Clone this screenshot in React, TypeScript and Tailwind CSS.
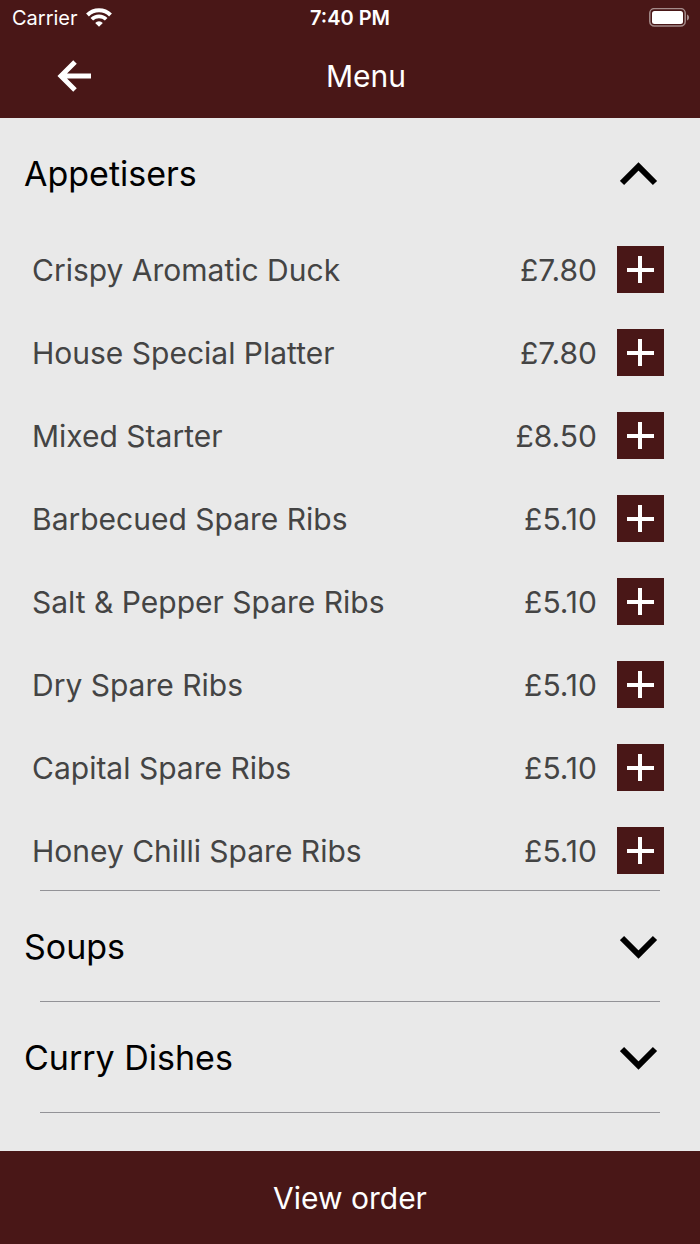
import { useState } from "react";

type MenuItem = { name: string; price: number };
type MenuSection = { title: string; items: MenuItem[] };

const SECTIONS: MenuSection[] = [
  {
    title: "Appetisers",
    items: [
      { name: "Crispy Aromatic Duck", price: 7.8 },
      { name: "House Special Platter", price: 7.8 },
      { name: "Mixed Starter", price: 8.5 },
      { name: "Barbecued Spare Ribs", price: 5.1 },
      { name: "Salt & Pepper Spare Ribs", price: 5.1 },
      { name: "Dry Spare Ribs", price: 5.1 },
      { name: "Capital Spare Ribs", price: 5.1 },
      { name: "Honey Chilli Spare Ribs", price: 5.1 },
    ],
  },
  { title: "Soups", items: [] },
  { title: "Curry Dishes", items: [] },
];

function gbp(n: number): string {
  return `£${n.toFixed(2)}`;
}

function WifiIcon() {
  return (
    <svg width={26} height={20} viewBox="0 0 26 20" fill="none" aria-hidden="true">
      <path d="M1.5 7 A16.3 16.3 0 0 1 24.5 7" stroke="white" strokeWidth={4} />
      <path d="M5.8 11.3 A10.2 10.2 0 0 1 20.2 11.3" stroke="white" strokeWidth={3.7} />
      <path d="M9.2 14.9 A5.4 5.4 0 0 1 16.8 14.9 L13 18.7 Z" fill="white" />
    </svg>
  );
}

function BatteryIcon() {
  return (
    <svg width={41} height={20} viewBox="0 0 41 20" fill="none" aria-hidden="true">
      <rect x={0.8} y={0.6} width={35.4} height={17.4} rx={4.5} stroke="#a48b8a" strokeWidth={1.5} />
      <rect x={3} y={3} width={31} height={13} rx={2.5} fill="white" />
      <path d="M38 6.5 C40.8 7.2 40.8 11.8 38 12.5 Z" fill="#a48b8a" />
    </svg>
  );
}

function ArrowLeftIcon() {
  return (
    <svg width={36} height={34} viewBox="0 0 36 34" fill="none" aria-hidden="true">
      <path d="M19 3 L5 17 L19 31 M5 17 H35" stroke="white" strokeWidth={5} />
    </svg>
  );
}

function Chevron({ open }: { open: boolean }) {
  return (
    <svg width={38} height={24} viewBox="0 0 38 24" fill="none" aria-hidden="true">
      <path
        d={open ? "M2 21 L18.5 4.5 L35 21" : "M2 3 L18.5 19.5 L35 3"}
        stroke="black"
        strokeWidth={6}
      />
    </svg>
  );
}

function PlusIcon() {
  return (
    <svg width={27} height={27} viewBox="0 0 27 27" fill="none" aria-hidden="true">
      <path d="M13 0 V27 M0 14 H27" stroke="white" strokeWidth={4} />
    </svg>
  );
}

function StatusBar() {
  return (
    <div className="grid h-9 grid-cols-3 items-center px-2.5 text-xl">
      <div className="flex items-center gap-2 pl-0.5">
        <span>Carrier</span>
        <WifiIcon />
      </div>
      <span className="text-center font-semibold">7:40 PM</span>
      <div className="flex justify-end">
        <BatteryIcon />
      </div>
    </div>
  );
}

function ItemRow({ item, onAdd }: { item: MenuItem; onAdd: () => void }) {
  return (
    <li className="flex items-center text-[30px] leading-9 text-[#444444]">
      <span className="flex-1">{item.name}</span>
      <span>{gbp(item.price)}</span>
      <button
        type="button"
        aria-label={`Add ${item.name}`}
        onClick={onAdd}
        className="ml-5 flex size-[47px] shrink-0 items-center justify-center bg-[#491717]"
      >
        <PlusIcon />
      </button>
    </li>
  );
}

function Section({ section, onAdd }: { section: MenuSection; onAdd: (item: MenuItem) => void }) {
  const [open, setOpen] = useState(section.items.length > 0);

  return (
    <section>
      <h2>
        <button
          type="button"
          aria-expanded={open}
          onClick={() => setOpen(!open)}
          className="flex h-[110px] w-full items-center justify-between pl-6 pr-[42px] pt-0.5 text-left text-[34px] leading-10 text-black"
        >
          {section.title}
          <Chevron open={open} />
        </button>
      </h2>
      {open && section.items.length > 0 && (
        <ul className="flex flex-col gap-9 pb-4 pl-8 pr-9 pt-[18px]">
          {section.items.map((item) => (
            <ItemRow key={item.name} item={item} onAdd={() => onAdd(item)} />
          ))}
        </ul>
      )}
      <hr className="mx-10 border-t border-[#939397]" />
    </section>
  );
}

export default function App() {
  const [, setOrder] = useState<MenuItem[]>([]);

  return (
    <div className="flex min-h-screen flex-col bg-[#e9e9e9] font-['Inter','Liberation_Sans',sans-serif]">
      <header className="bg-[#491717] text-white">
        <StatusBar />
        <div className="grid h-[82px] grid-cols-3 items-center pb-0.5 pl-8">
          <button type="button" aria-label="Back" className="ml-6 justify-self-start">
            <ArrowLeftIcon />
          </button>
          <h1 className="text-center text-[30px] leading-9">Menu</h1>
        </div>
      </header>

      <main className="flex-1">
        {SECTIONS.map((section) => (
          <Section
            key={section.title}
            section={section}
            onAdd={(item) => setOrder((prev) => [...prev, item])}
          />
        ))}
      </main>

      <button type="button" className="h-[93px] w-full bg-[#491717] text-[30px] leading-9 text-white">
        View order
      </button>
    </div>
  );
}
